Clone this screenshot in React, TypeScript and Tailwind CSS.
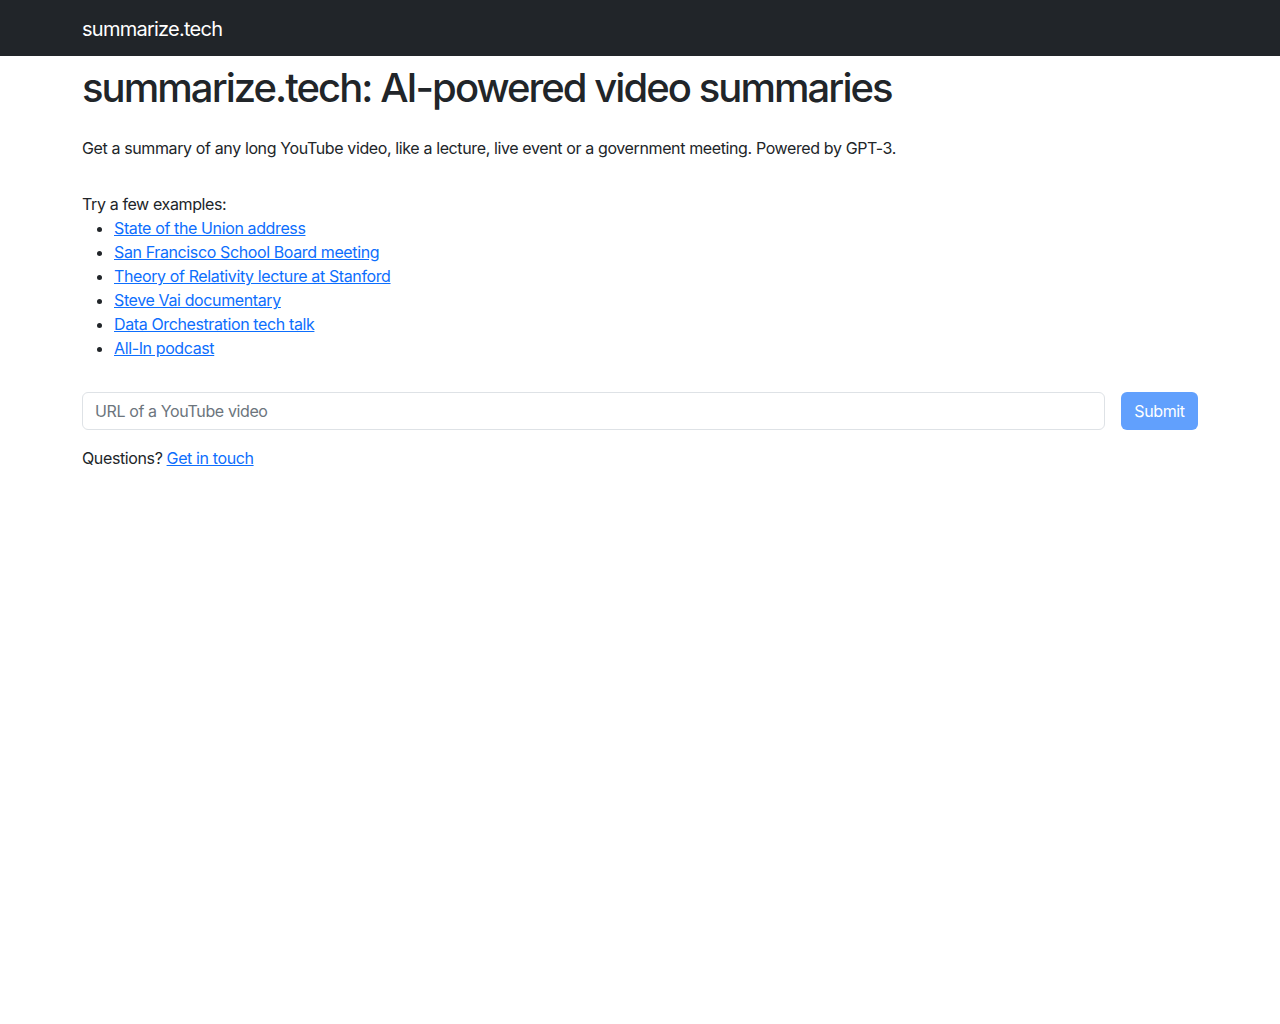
import React, { useState } from 'react';

const EXAMPLES = [
  'State of the Union address',
  'San Francisco School Board meeting',
  'Theory of Relativity lecture at Stanford',
  'Steve Vai documentary',
  'Data Orchestration tech talk',
  'All-In podcast',
];

export default function App() {
  const [url, setUrl] = useState('');

  return (
    <div className="min-h-screen bg-white text-[#212529] font-['Inter',_'Liberation_Sans',_sans-serif] text-base leading-6 tracking-[-0.38px]">
      <nav className="bg-[#212529] h-14 flex items-center">
        <div className="w-[1116px] mx-auto pt-0.5">
          <a href="#" className="text-white text-xl leading-[30px] tracking-[-0.75px]">summarize.tech</a>
        </div>
      </nav>

      <main className="w-[1116px] mx-auto">
        <h1 className="text-[40px] leading-[48px] font-medium mt-2 mb-2 tracking-[-1.95px]">
          summarize.tech: AI-powered video summaries
        </h1>
        <p className="mt-6 mb-8">
          Get a summary of any long YouTube video, like a lecture, live event or a government meeting. Powered by GPT-3.
        </p>
        <div>Try a few examples:</div>
        <ul className="list-disc pl-8 mb-8">
          {EXAMPLES.map((ex) => (
            <li key={ex}>
              <a href="#" className="text-[#0d6efd] underline">{ex}</a>
            </li>
          ))}
        </ul>

        <form className="flex gap-4" onSubmit={(e) => e.preventDefault()}>
          <input
            value={url}
            onChange={(e) => setUrl(e.target.value)}
            placeholder="URL of a YouTube video"
            className="flex-1 h-[38px] px-3 border border-[#dee2e6] rounded-md text-base placeholder:text-[#6c757d] focus:outline-none"
          />
          <button
            type="submit"
            disabled={!url.trim()}
            className="h-[38px] w-[77px] rounded-md bg-[#0d6efd] disabled:opacity-65 text-white"
          >
            Submit
          </button>
        </form>

        <p className="mt-4">
          Questions? <a href="#" className="text-[#0d6efd] underline">Get in touch</a>
        </p>
      </main>
    </div>
  );
}
